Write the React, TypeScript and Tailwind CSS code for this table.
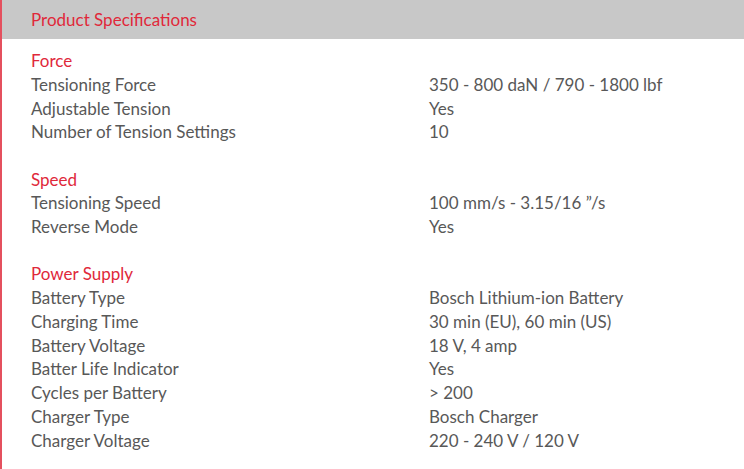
import React from "react";

type Section = { title: string; rows: [string, string][] };

const sections: Section[] = [
  {
    title: "Force",
    rows: [
      ["Tensioning Force", "350 - 800 daN / 790 - 1800 lbf"],
      ["Adjustable Tension", "Yes"],
      ["Number of Tension Settings", "10"],
    ],
  },
  {
    title: "Speed",
    rows: [
      ["Tensioning Speed", "100 mm/s - 3.15/16 \u201D/s"],
      ["Reverse Mode", "Yes"],
    ],
  },
  {
    title: "Power Supply",
    rows: [
      ["Battery Type", "Bosch Lithium-ion Battery"],
      ["Charging Time", "30 min (EU), 60 min (US)"],
      ["Battery Voltage", "18 V, 4 amp"],
      ["Batter Life Indicator", "Yes"],
      ["Cycles per Battery", "> 200"],
      ["Charger Type", "Bosch Charger"],
      ["Charger Voltage", "220 - 240 V / 120 V"],
    ],
  },
];

export default function App() {
  return (
    <div
      className="w-[744px] h-[469px] bg-white border-l-2 border-[#e4505e] overflow-hidden"
      style={{ fontFamily: "Lato, 'Noto Sans', sans-serif" }}
    >
      <div className="h-[39px] bg-[#c8c8c8] flex items-center pl-[29px]">
        <span className="text-[17px] text-[#e0283a]">Product Specifications</span>
      </div>
      <div className="pl-[29px] pt-[10px] flex flex-col gap-[23.5px]">
        {sections.map((s) => (
          <div key={s.title} className="flex flex-col">
            <div className="h-[23.75px] leading-[23.75px] text-[17px] text-[#e0283a]">{s.title}</div>
            {s.rows.map(([k, v]) => (
              <div key={k} className="flex h-[23.75px] leading-[23.75px] text-[17px] text-[#585858]">
                <span className="w-[398px] shrink-0">{k}</span>
                <span>{v}</span>
              </div>
            ))}
          </div>
        ))}
      </div>
    </div>
  );
}
